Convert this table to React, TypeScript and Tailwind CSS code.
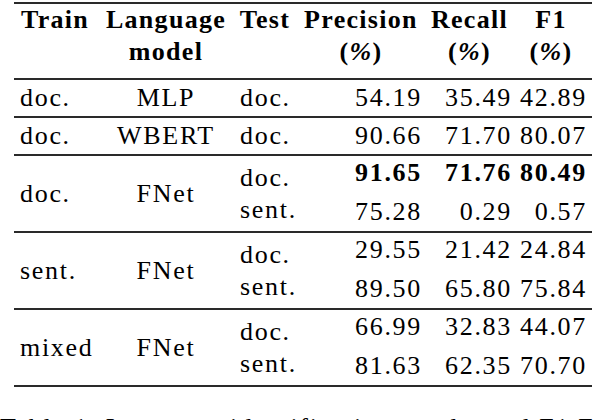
import React from "react";

const Rule = () => <div className="h-[2px] bg-[#2a2a2a]" />;

const cols = "grid grid-cols-[82px_140px_61px_130px_87px_78px]";

function Num({ v, pr, bold }: { v: string; pr: string; bold?: boolean }) {
  return <div className={`text-right h-[32px] ${pr} ${bold ? "font-bold" : ""}`}>{v}</div>;
}

function SingleRow({ train, model, test, p, r, f }: { train: string; model: string; test: string; p: string; r: string; f: string }) {
  return (
    <div className={`${cols} h-[36px] items-center`}>
      <div className="pl-[6px]">{train}</div>
      <div className="text-center">{model}</div>
      <div className="pl-[4px]">{test}</div>
      <Num v={p} pr="pr-[5px]" />
      <Num v={r} pr="pr-[2px]" />
      <Num v={f} pr="pr-[5px]" />
    </div>
  );
}

function GroupRow({ train, rows, bold }: { train: string; rows: [string, string, string, string][]; bold?: boolean }) {
  return (
    <div className={`${cols} h-[75px]`}>
      <div className="pl-[6px] flex items-center">{train}</div>
      <div className="flex items-center justify-center">FNet</div>
      <div className="pl-[4px] flex flex-col justify-center">
        <div>{rows[0][0]}</div>
        <div>{rows[1][0]}</div>
      </div>
      <div className="col-span-3 flex flex-col gap-[7px] pt-[1px]">
        {rows.map((rw, i) => (
          <div key={i} className="grid grid-cols-[130px_87px_78px]">
            <Num v={rw[1]} pr="pr-[5px]" bold={bold && i === 0} />
            <Num v={rw[2]} pr="pr-[2px]" bold={bold && i === 0} />
            <Num v={rw[3]} pr="pr-[5px]" bold={bold && i === 0} />
          </div>
        ))}
      </div>
    </div>
  );
}

export default function App() {
  return (
    <div className="w-[594px] h-[420px] bg-white text-black overflow-hidden text-[26px] leading-[32px] tracking-[0.065em] font-['Liberation_Serif','Times_New_Roman',serif]">
      <div className="ml-[14px] w-[578px] pt-[2px]">
        <Rule />
        <div className={`${cols} font-bold h-[74px] tracking-[0.05em]`}>
          <div className="text-center">Train</div>
          <div className="text-center">
            Language
            <br />
            model
          </div>
          <div className="text-center pr-[3px]">Test</div>
          <div className="text-center pr-[2px]">
            Precision
            <br />
            (<span className="italic">%</span>)
          </div>
          <div className="text-center pr-[2px]">
            Recall
            <br />
            (<span className="italic">%</span>)
          </div>
          <div className="text-center pr-[4px]">
            F1
            <br />
            (<span className="italic">%</span>)
          </div>
        </div>
        <Rule />
        <SingleRow train="doc." model="MLP" test="doc." p="54.19" r="35.49" f="42.89" />
        <Rule />
        <SingleRow train="doc." model="WBERT" test="doc." p="90.66" r="71.70" f="80.07" />
        <Rule />
        <GroupRow
          train="doc."
          bold
          rows={[
            ["doc.", "91.65", "71.76", "80.49"],
            ["sent.", "75.28", "0.29", "0.57"],
          ]}
        />
        <Rule />
        <GroupRow
          train="sent."
          rows={[
            ["doc.", "29.55", "21.42", "24.84"],
            ["sent.", "89.50", "65.80", "75.84"],
          ]}
        />
        <Rule />
        <GroupRow
          train="mixed"
          rows={[
            ["doc.", "66.99", "32.83", "44.07"],
            ["sent.", "81.63", "62.35", "70.70"],
          ]}
        />
        <Rule />
      </div>
      <div className="mt-[25px] whitespace-nowrap leading-[31px]">
        Table 1: Language identification results and F1 F2F scores for different
      </div>
    </div>
  );
}
